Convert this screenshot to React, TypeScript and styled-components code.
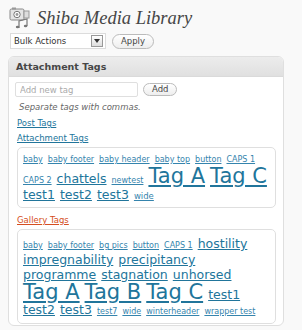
import React from 'react'
import styled, { createGlobalStyle } from 'styled-components'

const GlobalStyle = createGlobalStyle`
  html, body {
    margin: 0;
    padding: 0;
    background: #f9f9f9;
    font-family: 'DejaVu Sans', Verdana, sans-serif;
    color: #333;
  }
`

const Page = styled.div`
  width: 302px;
  height: 330px;
  padding: 5px 0 0 8px;
  box-sizing: border-box;
  overflow: hidden;
`

const TitleRow = styled.div`
  display: flex;
  align-items: center;
  gap: 6px;
  height: 24px;
  padding-left: 1px;
`

const Title = styled.h2`
  margin: 3px 0 0 0;
  font-family: 'Liberation Serif', Georgia, serif;
  font-style: italic;
  font-weight: normal;
  font-size: 18.5px;
  color: #464646;
`

const ActionsRow = styled.div`
  display: flex;
  align-items: center;
  gap: 6px;
  margin: 4px 0 0 2px;
`

const Select = styled.div`
  display: flex;
  align-items: center;
  justify-content: space-between;
  width: 96px;
  height: 16px;
  box-sizing: border-box;
  padding: 0 2px 0 3px;
  background: #fff;
  border: 1px solid #dcdcdc;
  font-size: 8.5px;
  color: #333;
`

const SelectArrow = styled.span`
  display: flex;
  align-items: center;
  justify-content: center;
  width: 10px;
  height: 10px;
  border: 1px solid #999;
  background: linear-gradient(#fff, #ddd);
`

const PillButton = styled.button<{ $h?: number }>`
  height: ${(p) => p.$h ?? 15}px;
  padding: 0 8px;
  border: 1px solid #bbb;
  border-radius: 10px;
  background: linear-gradient(#fff, #eee);
  font-family: 'DejaVu Sans', Verdana, sans-serif;
  font-size: 8.5px;
  color: #464646;
  line-height: 1;
`

const Panel = styled.div`
  margin-top: 7px;
  width: 276px;
  height: 270px;
  box-sizing: border-box;
  background: #fff;
  border: 1px solid #dfdfdf;
  border-radius: 6px;
  overflow: hidden;
`

const PanelHeader = styled.h3`
  margin: 0;
  height: 19px;
  padding: 0 7px;
  display: flex;
  align-items: center;
  background: linear-gradient(#ececec, #e0e0e0);
  border-bottom: 1px solid #dadada;
  font-size: 9.5px;
  font-weight: bold;
  color: #464646;
`

const PanelBody = styled.div`
  padding: 5px 6px 0 6px;
`

const AddRow = styled.div`
  display: flex;
  align-items: center;
  gap: 5px;
`

const TagInput = styled.input`
  width: 123px;
  height: 15px;
  box-sizing: border-box;
  border: 1px solid #dfdfdf;
  border-radius: 2px;
  padding: 0 4px;
  font-family: 'DejaVu Sans', Verdana, sans-serif;
  font-size: 8.5px;
  &::placeholder {
    color: #aaa;
  }
`

const Hint = styled.p`
  margin: 5px 0 0 4px;
  font-size: 8.5px;
  font-style: italic;
  color: #666;
  line-height: 10px;
`

const SectionLink = styled.a<{ $active?: boolean; $gap: number }>`
  display: block;
  margin: ${(p) => p.$gap}px 0 0 2px;
  font-size: 8.5px;
  color: ${(p) => (p.$active ? '#d54e21' : '#21759b')};
  text-decoration: underline;
  line-height: 10px;
  width: max-content;
`

const Cloud = styled.div`
  margin: 4px 0 0 2px;
  width: 259px;
  box-sizing: border-box;
  padding: 6px 5px 5px 5px;
  border: 1px solid #dfdfdf;
  border-radius: 5px;
  display: flex;
  flex-wrap: wrap;
  align-items: baseline;
  column-gap: 5px;
`

const TagLink = styled.a<{ $size: number }>`
  font-size: ${(p) => p.$size}px;
  line-height: ${(p) => (p.$size > 14 ? 20 : p.$size > 10 ? 15 : 12)}px;
  color: ${(p) => (p.$size > 10 ? '#21759b' : '#3584ad')};
  text-decoration: underline;
  white-space: nowrap;
`

const S = 8
const M = 12.5
const L = 21

const attachmentTags: [string, number][] = [
  ['baby', S], ['baby footer', S], ['baby header', S], ['baby top', S], ['button', S], ['CAPS 1', S],
  ['CAPS 2', S], ['chattels', M], ['newtest', S], ['Tag A', L], ['Tag C', L],
  ['test1', M], ['test2', M], ['test3', M], ['wide', 8.5],
]

const galleryTags: [string, number][] = [
  ['baby', S], ['baby footer', S], ['bg pics', S], ['button', S], ['CAPS 1', S], ['hostility', M],
  ['impregnability', M], ['precipitancy', M],
  ['programme', M], ['stagnation', M], ['unhorsed', M],
  ['Tag A', L], ['Tag B', L], ['Tag C', L], ['test1', M],
  ['test2', M], ['test3', M], ['test7', S], ['wide', S], ['winterheader', S], ['wrapper test', S],
]

const MediaIcon = () => (
  <svg width="22" height="23" viewBox="0 0 22 23">
    <rect x="1" y="3" width="14" height="11" rx="1.5" fill="#e4e4e4" stroke="#888" />
    <rect x="3" y="1.5" width="4" height="2" fill="#999" />
    <circle cx="8" cy="8.5" r="3.2" fill="#fff" stroke="#777" />
    <circle cx="8" cy="8.5" r="1.4" fill="#999" />
    <rect x="15" y="5" width="5" height="7" fill="#ddd" stroke="#999" />
    <path d="M10 22V15l8-2v7" fill="none" stroke="#777" strokeWidth="1.2" />
    <ellipse cx="8.6" cy="21" rx="1.8" ry="1.3" fill="#777" />
    <ellipse cx="16.6" cy="20" rx="1.8" ry="1.3" fill="#777" />
  </svg>
)

const TagCloud = ({ tags }: { tags: [string, number][] }) => (
  <Cloud>
    {tags.map(([name, size], i) => (
      <TagLink key={i} href="#" $size={size}>
        {name}
      </TagLink>
    ))}
  </Cloud>
)

export default function App() {
  return (
    <Page>
      <GlobalStyle />
      <TitleRow>
        <MediaIcon />
        <Title>Shiba Media Library</Title>
      </TitleRow>
      <ActionsRow>
        <Select>
          Bulk Actions
          <SelectArrow>
            <svg width="6" height="4" viewBox="0 0 6 4">
              <path d="M0 0h6L3 4z" fill="#333" />
            </svg>
          </SelectArrow>
        </Select>
        <PillButton>Apply</PillButton>
      </ActionsRow>
      <Panel>
        <PanelHeader>Attachment Tags</PanelHeader>
        <PanelBody>
          <AddRow>
            <TagInput placeholder="Add new tag" />
            <PillButton $h={13}>Add</PillButton>
          </AddRow>
          <Hint>Separate tags with commas.</Hint>
          <SectionLink href="#" $gap={6}>Post Tags</SectionLink>
          <SectionLink href="#" $gap={5}>Attachment Tags</SectionLink>
          <TagCloud tags={attachmentTags} />
          <SectionLink href="#" $gap={7} $active>
            Gallery Tags
          </SectionLink>
          <TagCloud tags={galleryTags} />
        </PanelBody>
      </Panel>
    </Page>
  )
}
